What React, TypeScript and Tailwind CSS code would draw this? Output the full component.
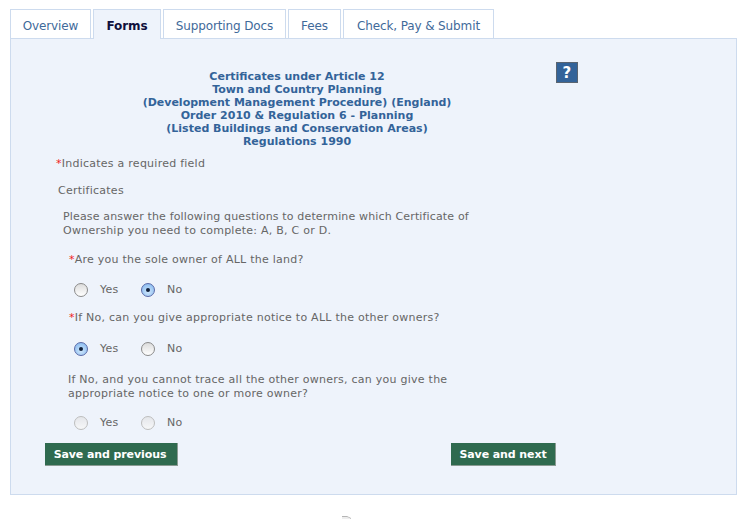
import React from 'react';

const tabs = [
  { label: 'Overview', width: 'w-[81px]' },
  { label: 'Forms', width: 'w-[68px]', active: true },
  { label: 'Supporting Docs', width: 'w-[123px]' },
  { label: 'Fees', width: 'w-[53px]' },
  { label: 'Check, Pay & Submit', width: 'w-[151px]' },
];

const Radio = ({ checked, disabled }: { checked?: boolean; disabled?: boolean }) => {
  if (checked) {
    return (
      <span className="flex h-[14px] w-[14px] items-center justify-center rounded-full border border-[#5a6aa8] bg-[radial-gradient(circle_at_50%_65%,#cfe6fb,#7db4ee)]">
        <span className="h-[4px] w-[4px] rounded-full bg-[#10203a]" />
      </span>
    );
  }
  return (
    <span
      className={`h-[14px] w-[14px] rounded-full border bg-gradient-to-b ${
        disabled ? 'border-[#bdbdbd] from-[#e4e6ea] to-[#f6f7f8]' : 'border-[#8a8a8a] from-[#dcdcdc] to-[#ffffff]'
      }`}
    />
  );
};

const YesNo = ({ value, disabled, className }: { value?: 'yes' | 'no'; disabled?: boolean; className: string }) => (
  <div className={`flex h-[14px] items-center pl-[63px] ${className}`}>
    <Radio checked={value === 'yes'} disabled={disabled} />
    <span className="ml-[12px] w-[41px]">Yes</span>
    <Radio checked={value === 'no'} disabled={disabled} />
    <span className="ml-[12px]">No</span>
  </div>
);

const Required = () => <span className="text-[#f02020]">*</span>;

export default function App() {
  return (
    <div className="h-[520px] w-[749px] overflow-hidden bg-white pl-[10px] pt-[9px] font-['DejaVu_Sans',sans-serif] text-[11px] leading-[14px] tracking-[0.25px] text-[#666666]">
      {/* Tabs */}
      <div className="relative z-10 flex h-[30px] gap-[2px]">
        {tabs.map((t) => (
          <div
            key={t.label}
            className={`flex h-[30px] items-center justify-center whitespace-nowrap border border-[#cddbee] pt-[3px] text-[12px] tracking-[-0.12px] ${t.width} ${
              t.active ? 'border-b-0 bg-[#eef3fb] font-bold text-[#10103c]' : 'bg-white text-[#3f6a9a]'
            }`}
          >
            {t.label}
          </div>
        ))}
      </div>

      {/* Panel */}
      <div className="-mt-px h-[457px] w-[727px] border border-[#cddbee] bg-[#eef3fb] pt-[23px]">
        <div className="flex pl-[34px]">
          <h1 className="mt-[8px] w-[504px] text-center text-[11px] font-bold leading-[13px] tracking-normal text-[#336399]">
            Certificates under Article 12
            <br />
            Town and Country Planning
            <br />
            (Development Management Procedure) (England)
            <br />
            Order 2010 &amp; Regulation 6 - Planning
            <br />
            (Listed Buildings and Conservation Areas)
            <br />
            Regulations 1990
          </h1>
          <div className="ml-[7px] flex h-[21px] w-[22px] items-center justify-center border border-[#5a6470] bg-[#336399] text-[15px] font-bold text-white">
            ?
          </div>
        </div>

        <p className="mt-[9px] pl-[45px]"><Required />Indicates a required field</p>
        <p className="mt-[13px] pl-[47px]">Certificates</p>
        <p className="mt-[12px] pl-[52px]">
          <span className="tracking-[0.15px]">Please answer the following questions to determine which Certificate of</span>
          <br />
          Ownership you need to complete: A, B, C or D.
        </p>
        <p className="mt-[15px] pl-[58px]"><Required />Are you the sole owner of ALL the land?</p>
        <YesNo value="no" className="mt-[16px]" />
        <p className="mt-[14px] pl-[58px]"><Required />If No, can you give appropriate notice to ALL the other owners?</p>
        <YesNo value="yes" className="mt-[17px]" />
        <p className="mt-[17px] pl-[57px]">
          If No, and you cannot trace all the other owners, can you give the
          <br />
          appropriate notice to one or more owner?
        </p>
        <YesNo disabled className="mt-[15px]" />

        <div className="mt-[13px] flex pl-[34px]">
          <button className="h-[23px] w-[133px] border-b border-r border-[#8a9a92] bg-[#2f6a4f] pr-[2px] pt-[2px] text-[11px] font-bold tracking-[-0.1px] text-white">
            Save and previous
          </button>
          <button className="ml-[273px] h-[23px] w-[105px] border-b border-r border-[#8a9a92] bg-[#2f6a4f] pt-[2px] text-[11px] font-bold tracking-[-0.1px] text-white">
            Save and next
          </button>
        </div>
      </div>

      <svg className="ml-[331px] mt-[21px]" width="12" height="4" viewBox="0 0 12 4">
        <path d="M1 0.5H6L10 2.5" fill="none" stroke="#b5b5b5" />
        <path d="M1 2H8" stroke="#dddddd" />
      </svg>
    </div>
  );
}
